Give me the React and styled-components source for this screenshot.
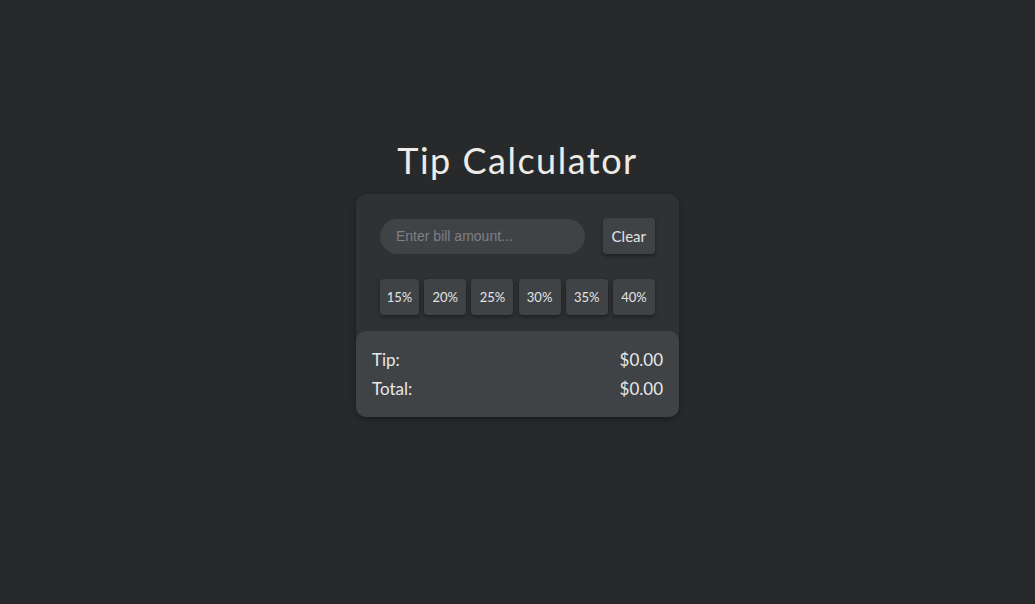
import React from "react";
import styled, { createGlobalStyle } from "styled-components";

const Global = createGlobalStyle`
  html, body { margin: 0; padding: 0; background: #28292b; }
  body { font-family: "Lato", "Noto Sans", sans-serif; color: #e6e6e6; }
  * { box-sizing: border-box; }
`;

const Page = styled.main`
  min-height: 604px;
  display: flex;
  flex-direction: column;
  align-items: center;
  padding-top: 139px;
`;

const Title = styled.h1`
  margin: 0 0 13px;
  font-family: "Lato", sans-serif;
  font-weight: 400;
  font-size: 36px;
  line-height: 42px;
  letter-spacing: 1.5px;
  color: #ecebe8;
`;

const Card = styled.section`
  width: 323px;
  background: #2f3133;
  border-radius: 10px;
  box-shadow: 0 2px 6px rgba(0, 0, 0, 0.35);
  display: flex;
  flex-direction: column;
`;

const Controls = styled.div`
  padding: 24px 24px 16px;
  display: flex;
  flex-direction: column;
  gap: 25px;
`;

const InputRow = styled.div`
  display: flex;
  align-items: center;
  justify-content: space-between;
`;

const BillInput = styled.input`
  width: 205px;
  height: 35px;
  border: none;
  outline: none;
  border-radius: 18px;
  background: #404346;
  padding: 0 16px;
  font-family: "Liberation Sans", Arial, sans-serif;
  font-size: 14px;
  color: #ddd;
  &::placeholder { color: #7d8084; }
`;

const Button = styled.button`
  height: 36px;
  padding: 0 ${(p) => p.$pad || 8}px;
  border: none;
  border-radius: 4px;
  background: #404346;
  color: #e4e4e4;
  font-family: "Lato", sans-serif;
  font-size: ${(p) => p.$size || 13}px;
  box-shadow: 0 2px 4px rgba(0, 0, 0, 0.4);
  cursor: pointer;
`;

const PercentRow = styled.div`
  display: flex;
  justify-content: space-between;
  gap: 5px;
`;

const PercentButton = styled(Button)`
  flex: ${(p) => (p.$narrow ? "0 0 39px" : "0 0 42px")};
  padding: 0;
`;

const Results = styled.div`
  background: #404346;
  border-radius: 10px;
  padding: 19px 16px 18px;
  display: flex;
  flex-direction: column;
  gap: 9px;
`;

const ResultRow = styled.div`
  display: flex;
  justify-content: space-between;
  font-size: 17px;
  line-height: 20px;
  color: #e8e8e8;
`;

export default function App() {
  const tips = ["15%", "20%", "25%", "30%", "35%", "40%"];
  return (
    <>
      <Global />
      <Page>
        <Title>Tip Calculator</Title>
        <Card>
          <Controls>
            <InputRow>
              <BillInput placeholder="Enter bill amount..." />
              <Button $size={15} $pad={9}>Clear</Button>
            </InputRow>
            <PercentRow>
              {tips.map((t, i) => (
                <PercentButton key={t} $narrow={i === 0}>
                  {t}
                </PercentButton>
              ))}
            </PercentRow>
          </Controls>
          <Results>
            <ResultRow>
              <span>Tip:</span>
              <span>$0.00</span>
            </ResultRow>
            <ResultRow>
              <span>Total:</span>
              <span>$0.00</span>
            </ResultRow>
          </Results>
        </Card>
      </Page>
    </>
  );
}
